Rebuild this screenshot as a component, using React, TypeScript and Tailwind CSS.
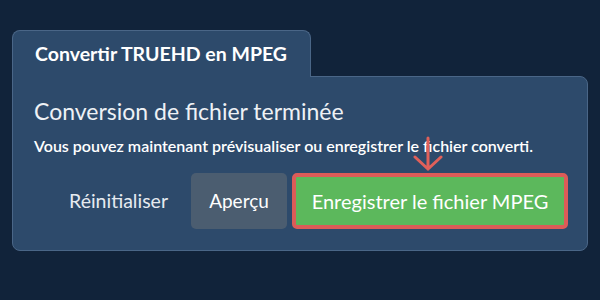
import React from "react";

export default function App() {
  return (
    <div
      className="w-[600px] h-[300px] bg-[#11233a] pt-[30px] px-[12px]"
      style={{ fontFamily: "Lato, 'Noto Sans', sans-serif" }}
    >
      {/* tab */}
      <div className="relative z-10 w-[299px] h-[47px] -mb-px rounded-t-[8px] border border-b-0 border-[#4a6687] bg-[#2d4a6b] flex items-center pl-[22px]">
        <span className="text-[19.5px] font-bold text-white">
          Convertir TRUEHD en MPEG
        </span>
      </div>
      {/* panel */}
      <div className="relative h-[175px] rounded-b-[8px] rounded-tr-[8px] border border-[#4a6687] bg-[#2d4a6b] pl-[21px] pr-[19px] pt-[20px]">
        <h1 className="text-[23px] leading-[28px] text-[#eef1f5]">
          Conversion de fichier terminée
        </h1>
        <p className="mt-[10px] text-[16px] font-semibold text-white leading-[21px]">
          Vous pouvez maintenant prévisualiser ou enregistrer le fichier converti.
        </p>
        <div className="mt-[17px] flex items-center justify-end">
          <span className="text-[19.5px] text-[#e6eaf0] mr-[23px]">Réinitialiser</span>
          <button className="h-[56px] w-[96px] rounded-[5px] bg-[#4b5d70] text-[19px] text-white mr-[5px]">
            Aperçu
          </button>
          <button className="h-[56px] w-[276px] rounded-[5px] border-[4px] border-[#dc5c58] bg-[#5cb85c] text-[20px] text-white">
            Enregistrer le fichier MPEG
          </button>
        </div>
        {/* arrow */}
        <svg
          className="absolute left-[400px] top-[59px]"
          width="30"
          height="36"
          viewBox="0 0 30 36"
          fill="none"
          stroke="#e0605a"
          strokeWidth="3"
          strokeLinecap="round"
        >
          <path d="M15 2 V33 M2 21 L15 33 L28 21" />
        </svg>
      </div>
    </div>
  );
}
